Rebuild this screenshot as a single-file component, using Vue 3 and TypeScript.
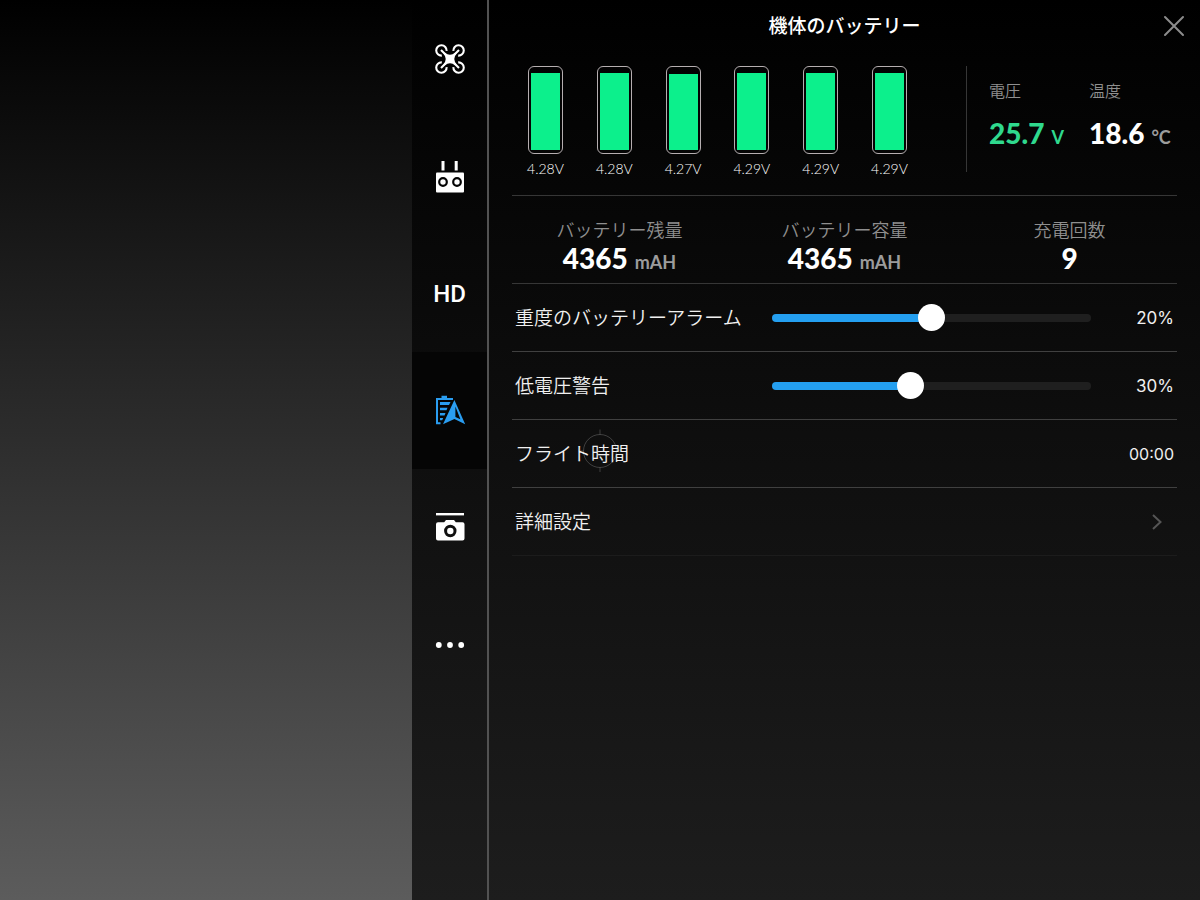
<script setup lang="ts">
import { ref } from 'vue'

type TabId = 'aircraft' | 'remote' | 'hd' | 'battery' | 'camera' | 'more'

interface Cell {
  volts: string
  level: number
}

interface Summary {
  label: string
  value: string
  unit?: string
}

interface Alarm {
  id: string
  label: string
  min: number
  max: number
  value: number
}

const tabs: { id: TabId; name: string }[] = [
  { id: 'aircraft', name: '機体' },
  { id: 'remote', name: '送信機' },
  { id: 'hd', name: 'HD' },
  { id: 'battery', name: 'バッテリー' },
  { id: 'camera', name: 'カメラ' },
  { id: 'more', name: 'その他' },
]
const activeTab = ref<TabId>('battery')

const cells: Cell[] = [
  { volts: '4.28V', level: 96 },
  { volts: '4.28V', level: 96 },
  { volts: '4.27V', level: 95 },
  { volts: '4.29V', level: 96 },
  { volts: '4.29V', level: 96 },
  { volts: '4.29V', level: 96 },
]

const summaries: Summary[] = [
  { label: 'バッテリー残量', value: '4365', unit: 'mAH' },
  { label: 'バッテリー容量', value: '4365', unit: 'mAH' },
  { label: '充電回数', value: '9' },
]

const alarms = ref<Alarm[]>([
  { id: 'critical', label: '重度のバッテリーアラーム', min: 10, max: 30, value: 20 },
  { id: 'low', label: '低電圧警告', min: 15, max: 50, value: 30 },
])

const filled = (a: Alarm): string => `${((a.value - a.min) / (a.max - a.min)) * 100}%`
</script>

<template>
  <div class="screen">
    <div class="view"></div>

    <nav class="tabs">
      <button
        v-for="tab in tabs"
        :key="tab.id"
        type="button"
        class="tab"
        :class="{ active: tab.id === activeTab }"
        :aria-label="tab.name"
        @click="activeTab = tab.id"
      >
        <svg v-if="tab.id === 'aircraft'" class="icon" viewBox="0 1 32 32">
          <g fill="none" stroke="currentColor" stroke-width="2.1">
            <path d="M12.6 7.8A5.2 5.2 0 1 0 7.8 12.6M7 7L16 16" />
            <path d="M12.6 7.8A5.2 5.2 0 1 0 7.8 12.6M7 7L16 16" transform="rotate(90 16 16)" />
            <path d="M12.6 7.8A5.2 5.2 0 1 0 7.8 12.6M7 7L16 16" transform="rotate(180 16 16)" />
            <path d="M12.6 7.8A5.2 5.2 0 1 0 7.8 12.6M7 7L16 16" transform="rotate(270 16 16)" />
          </g>
          <path fill="currentColor" d="M10.600 9.400Q16 14 21.400 9.400L22.600 10.600Q18 16 22.600 21.400L21.400 22.600Q16 18 10.600 22.600L9.400 21.400Q14 16 9.400 10.600Z" />
          <circle cx="16" cy="16" r="4" fill="currentColor" />
        </svg>
        <svg v-else-if="tab.id === 'remote'" class="icon" viewBox="0 1 32 32">
          <path fill="currentColor" d="M7.5 1h3v9.5h-3zM20.7 1h3v9.5h-3z" />
          <rect x="2" y="12.500" width="28" height="20" rx="1" fill="currentColor" />
          <g fill="currentColor" stroke="#050505" stroke-width="2.2">
            <circle cx="9" cy="22" r="3.8" />
            <circle cx="23" cy="22" r="3.8" />
          </g>
        </svg>
        <span v-else-if="tab.id === 'hd'" class="hd">HD</span>
        <svg v-else-if="tab.id === 'battery'" class="icon" viewBox="0 1 32 32">
          <path fill="currentColor" d="M2 4h5.5V1.8h5.5V4h6v2H4v22.2h2.5v2H2z" />
          <path fill="currentColor" d="M6 8h10.5l-1.5 3H6zM6 13.8h7.5l-1 2.4H6zM6 19h5.5l-1 2.4H6zM6 24h3.2l-1 2.2H6z" />
          <path fill="currentColor" fill-rule="evenodd" d="M20.4 6L31.2 30.2L20.4 25L9 30.2ZM21.4 12.5V23L26.4 25.2Z" />
        </svg>
        <svg v-else-if="tab.id === 'camera'" class="icon" viewBox="0 0 32 32">
          <path fill="currentColor" d="M2 1h28v2.4H2z" />
          <path fill="currentColor" d="M4 10.2h6.2L12 8h8l1.8 2.2h6.7a2 2 0 0 1 2 2v14.3a2 2 0 0 1-2 2H4a2 2 0 0 1-2-2V12.2a2 2 0 0 1 2-2z" />
          <circle cx="16.3" cy="19" r="4.7" fill="currentColor" stroke="#101010" stroke-width="3" />
        </svg>
        <svg v-else class="icon" viewBox="0 0 32 32">
          <g fill="currentColor">
            <circle cx="4.8" cy="16" r="2.9" />
            <circle cx="16" cy="16" r="2.9" />
            <circle cx="27.2" cy="16" r="2.9" />
          </g>
        </svg>
      </button>
    </nav>

    <main class="panel">
      <header class="head">
        <h1>機体のバッテリー</h1>
        <button type="button" class="close" aria-label="閉じる">
          <svg viewBox="0 0 24 24"><path d="M3 3L21 21M21 3L3 21" /></svg>
        </button>
      </header>

      <section class="status">
        <ul class="cells">
          <li v-for="(cell, i) in cells" :key="i" class="cell">
            <div class="shell">
              <div class="charge" :style="{ height: cell.level + '%' }"></div>
            </div>
            <span>{{ cell.volts }}</span>
          </li>
        </ul>
        <dl class="readouts">
          <div>
            <dt>電圧</dt>
            <dd class="good"><span class="number">25.7</span><span class="unit">V</span></dd>
          </div>
          <div>
            <dt>温度</dt>
            <dd><span class="number">18.6</span><span class="unit">°C</span></dd>
          </div>
        </dl>
      </section>

      <dl class="summary">
        <div v-for="item in summaries" :key="item.label">
          <dt>{{ item.label }}</dt>
          <dd>
            <span class="number">{{ item.value }}</span>
            <span v-if="item.unit" class="unit">{{ item.unit }}</span>
          </dd>
        </div>
      </dl>

      <div v-for="alarm in alarms" :key="alarm.id" class="row">
        <label :for="alarm.id">{{ alarm.label }}</label>
        <input
          :id="alarm.id"
          v-model.number="alarm.value"
          type="range"
          :min="alarm.min"
          :max="alarm.max"
          :style="{ '--filled': filled(alarm) }"
        />
        <output :for="alarm.id">{{ alarm.value }}%</output>
      </div>
      <div class="row">
        <span>フライト時間</span>
        <span class="time">00:00</span>
      </div>
      <button type="button" class="row link">
        <span>詳細設定</span>
        <svg class="chevron" viewBox="0 0 10 16"><path d="M1 1L8.5 8L1 15" /></svg>
      </button>
    </main>

    <svg class="reticle" viewBox="0 0 44 44">
      <circle cx="22" cy="23" r="16.5" />
      <path d="M22 1.5V6.5M22 39.5V44M0.5 23H5.5M38.5 23H43.5" />
    </svg>
  </div>
</template>

<style>
html,
body,
#app {
  height: 100%;
}
body {
  margin: 0;
  background: #000;
}
</style>

<style scoped>
.screen {
  position: relative;
  display: grid;
  grid-template-columns: 412fr 77px 711fr;
  min-height: 100%;
  color: #fff;
  font-family: Lato, "Noto Sans CJK JP", sans-serif;
  background: linear-gradient(#000, #5c5c5c);
}
.screen * {
  box-sizing: border-box;
}
button {
  padding: 0;
  border: 0;
  background: none;
  color: inherit;
  font: inherit;
  cursor: pointer;
}
dl,
dd,
ul,
h1 {
  margin: 0;
  padding: 0;
}

.tabs {
  display: flex;
  flex-direction: column;
  padding-top: 1px;
  border-right: 2px solid #525252;
  background: linear-gradient(#000, #1d1d1d);
}
.tab {
  display: flex;
  align-items: center;
  justify-content: center;
  height: 117px;
}
.tab.active {
  color: #2a9df0;
  background: #050505;
}
.icon {
  width: 32px;
  height: 32px;
}
.hd {
  font: 500 24px/32px Roboto, sans-serif;
}

.panel {
  padding: 0 23px;
  background: linear-gradient(#000, #1d1d1d);
}
.head {
  position: relative;
  display: flex;
  align-items: center;
  justify-content: center;
  height: 52px;
}
h1 {
  font-size: 19px;
  font-weight: 500;
  line-height: 28px;
}
.close {
  position: absolute;
  right: -9px;
  top: 14px;
  width: 24px;
  height: 24px;
}
.close svg {
  display: block;
  fill: none;
  stroke: #8c8c8c;
  stroke-width: 2;
  stroke-linecap: round;
}

.status {
  display: flex;
  justify-content: space-between;
  height: 144px;
  padding: 14px 0 0 16px;
  border-bottom: 1px solid #363636;
}
.cells {
  display: flex;
  flex: 0 1 379px;
  justify-content: space-between;
  list-style: none;
}
.cell {
  display: flex;
  flex-direction: column;
  align-items: center;
  gap: 5px;
  width: 35px;
  font-size: 14px;
  font-weight: 300;
  line-height: 20px;
  color: #fff;
}
.shell {
  display: flex;
  flex-direction: column;
  justify-content: flex-end;
  flex: none;
  width: 35px;
  height: 88px;
  padding: 3px 2px;
  border: 1px solid #b5aeb0;
  border-radius: 6px;
}
.charge {
  background: #0cf08c;
}
.readouts {
  display: grid;
  grid-template-columns: 100px 88px;
  align-self: flex-start;
  height: 106px;
  padding: 11px 0 0 22px;
  border-left: 1px solid #363636;
}
dt {
  color: #8f8f8f;
  font-weight: 350;
}
.readouts dt {
  font-size: 16px;
  line-height: 28px;
}
dd {
  display: flex;
  align-items: baseline;
  gap: 7px;
  white-space: nowrap;
}
.readouts dd {
  margin-top: 10px;
  line-height: 36px;
}
.number {
  font-size: 28px;
  font-weight: 900;
}
.unit {
  color: #9c9c9c;
  font-size: 18px;
  font-weight: 700;
}
.good,
.good .unit {
  color: #2fd98e;
}

.summary {
  display: grid;
  grid-template-columns: repeat(3, 1fr);
  gap: 10px;
  height: 88px;
  padding-top: 20px;
  border-bottom: 1px solid #363636;
  text-align: center;
}
.summary dt {
  font-size: 18px;
  line-height: 28px;
}
.summary dd {
  justify-content: center;
  line-height: 28px;
}

.row {
  display: grid;
  grid-template-columns: 257px 1fr 83px;
  align-items: center;
  width: 100%;
  height: 68px;
  padding: 0 3px;
  border-bottom: 1px solid #404040;
  color: #f0f0f0;
  font-size: 19px;
  font-weight: 350;
  line-height: 28px;
  text-align: left;
}
.row output,
.time {
  grid-column: 3;
  justify-self: end;
  font-family: Inter, sans-serif;
  font-size: 17px;
  font-weight: 400;
}
.row .time {
  font-size: 16px;
}
.link {
  border-bottom-color: #1c1c1c;
}
.chevron {
  grid-column: 3;
  justify-self: end;
  width: 10px;
  height: 16px;
  margin-right: 12px;
  fill: none;
  stroke: #555;
  stroke-width: 2;
}

input[type='range'] {
  appearance: none;
  width: 100%;
  height: 28px;
  margin: 0;
  background: transparent;
}
input[type='range']::-webkit-slider-runnable-track {
  height: 8px;
  border-radius: 4px;
  background: linear-gradient(to right, #249ff0 var(--filled), #1f1f1f var(--filled));
}
input[type='range']::-webkit-slider-thumb {
  appearance: none;
  width: 27px;
  height: 27px;
  margin-top: -10px;
  border-radius: 50%;
  background: #fff;
}

.reticle {
  position: absolute;
  left: 50%;
  top: 50%;
  width: 44px;
  height: 44px;
  transform: translate(-50%, -50%);
  fill: none;
  stroke: #fff;
  stroke-opacity: 0.2;
  pointer-events: none;
}
</style>
